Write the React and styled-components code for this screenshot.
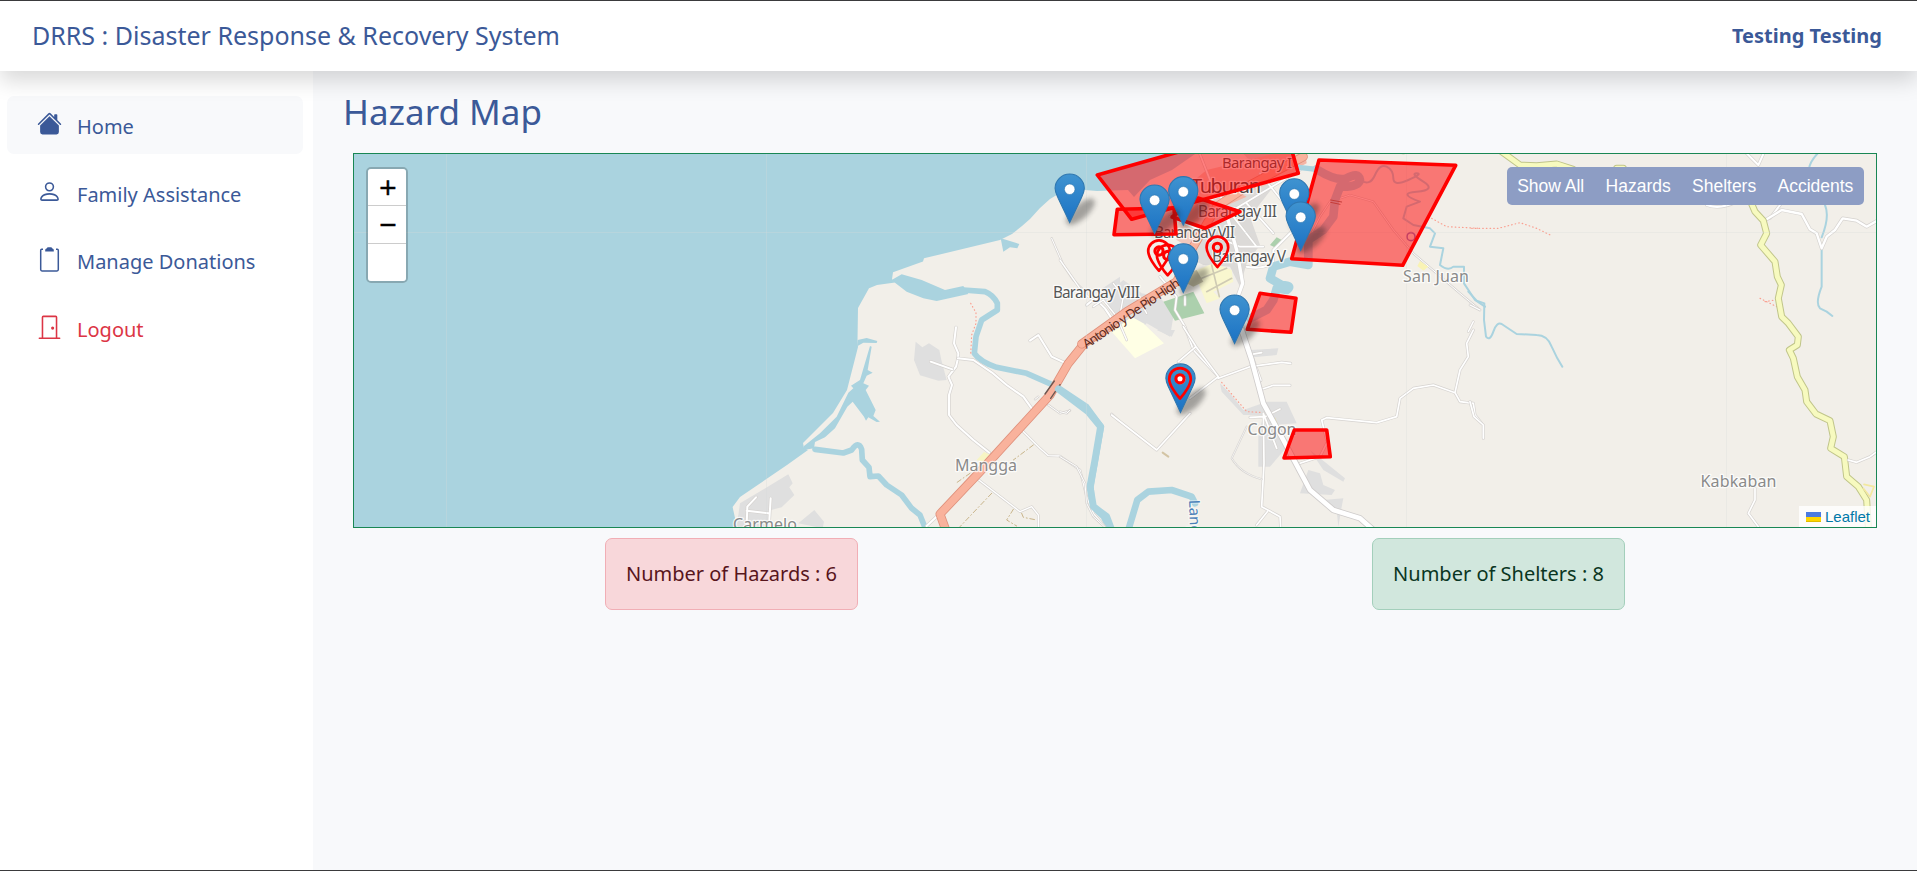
import React from "react";
import styled, { createGlobalStyle, css } from "styled-components";
import { BsHouseFill, BsPerson, BsDoorClosed } from "react-icons/bs";

const GlobalStyle = createGlobalStyle`
  *, *::before, *::after { box-sizing: border-box; }
  body {
    margin: 0;
    font-family: "Noto Sans", "Liberation Sans", sans-serif;
    font-size: 20px;
    line-height: 1.5;
    color: #3b5998;
    background: #f8f9fb;
  }
`;

const Page = styled.div`
  display: flex;
  flex-direction: column;
  height: 871px;
  border-top: 1px solid #3a3a3c;
  border-bottom: 1px solid #3a3a3c;
  overflow: hidden;
`;

const Header = styled.header`
  position: relative;
  z-index: 2;
  flex: none;
  display: flex;
  align-items: center;
  justify-content: space-between;
  height: 70px;
  padding: 0 35px 0 32px;
  background: #fff;
  box-shadow: 0 10px 20px rgba(0, 0, 0, 0.15);
`;

const Brand = styled.div`
  font-size: 25px;
`;

const UserName = styled.div`
  font-weight: 700;
  font-size: 20px;
`;

const Body = styled.div`
  flex: 1;
  display: flex;
  min-height: 0;
`;

const Sidebar = styled.nav`
  flex: none;
  display: flex;
  flex-direction: column;
  gap: 10px;
  width: 313px;
  padding: 25px 10px 0 7px;
  background: #fff;
`;

const NavItem = styled.a`
  display: flex;
  align-items: center;
  gap: 15px;
  height: 57.7px;
  padding: 0 30px;
  border-radius: 7px;
  color: ${(p) => (p.$danger ? "#dc3545" : "#3b5998")};
  ${(p) => p.$active && css`background: #f8f9fb;`}
  svg {
    width: 25px;
    height: 25px;
    margin-bottom: 2px;
  }
`;

const NavLabel = styled.span`
  padding-top: 4px;
`;

const Main = styled.main`
  flex: 1;
  display: flex;
  flex-direction: column;
  padding: 14px 35px 0 30px;
`;

const Title = styled.h1`
  margin: 0 0 15px;
  font-size: 35px;
  font-weight: 400;
  line-height: 53px;
`;

const MapFrame = styled.section`
  position: relative;
  height: 375px;
  margin: 0 5px 0 10px;
  border: 1px solid #198754;
  overflow: hidden;
`;

const MapCanvas = styled.svg`
  display: block;
  width: 1522px;
  height: 373px;
`;

const ZoomControl = styled.div`
  position: absolute;
  top: 13px;
  left: 12px;
  width: 42px;
  border: 2px solid rgba(0, 0, 0, 0.2);
  border-radius: 5px;
  background-clip: padding-box;
`;

const ZoomButton = styled.button`
  display: flex;
  align-items: center;
  justify-content: center;
  width: 100%;
  height: 38px;
  padding: 0 0 0 2px;
  border: 0;
  border-bottom: 1px solid #ccc;
  background: #fff;
  color: #000;
  font: 23px/1 "DejaVu Sans", sans-serif;
  -webkit-text-stroke: 0.5px #000;
  &:first-child { height: 37px; border-radius: 3px 3px 0 0; }
  &:last-child { height: 37px; border-bottom: 0; border-radius: 0 0 3px 3px; }
`;

const FilterBar = styled.div`
  position: absolute;
  top: 13px;
  right: 12px;
  display: flex;
  height: 38px;
  border-radius: 5px;
  background: #8d9dc4;
  overflow: hidden;
`;

const FilterButton = styled.button`
  padding: 0 10.65px;
  border: 0;
  background: none;
  color: #fff;
  font: 17.5px "Liberation Sans", Arial, sans-serif;
`;

const Attribution = styled.div`
  position: absolute;
  right: 0;
  bottom: 0;
  display: flex;
  align-items: center;
  gap: 4px;
  height: 21px;
  padding: 0 6px 0 7px;
  background: rgba(255, 255, 255, 0.8);
  color: #0078a8;
  font: 15px "Liberation Sans", Arial, sans-serif;
`;

const Flag = styled.svg`
  width: 15px;
  height: 10px;
`;

const Stats = styled.div`
  display: grid;
  grid-template-columns: 1fr 1fr;
  justify-items: center;
  margin: 10px 0 0 5px;
`;

const tones = {
  danger: css`background: #f8d7da; border-color: #f1aeb5; color: #58151c;`,
  success: css`background: #d1e7dd; border-color: #a3cfbb; color: #0a3622;`,
};

const Stat = styled.div`
  display: flex;
  align-items: center;
  justify-content: center;
  width: 253px;
  height: 72px;
  border: 1px solid;
  border-radius: 7px;
  ${(p) => tones[p.$tone]}
`;

const ClipboardIcon = () => (
  <svg viewBox="0 0 25 25" fill="none">
    <path d="M6 2.3H4.6Q3.7 2.3 3.7 3.4V22.6Q3.7 24 5 24H20Q21.3 24 21.3 22.6V3.4Q21.3 2.3 20.4 2.3H19" stroke="currentColor" strokeWidth="1.5" />
    <path d="M8.2 4.4V3Q8.2 2 9.6 1.6Q10 0.2 11.4 0.2H13.6Q15 0.2 15.4 1.6Q16.8 2 16.8 3V4.4Z" fill="currentColor" />
  </svg>
);

/* Map sheets are drafted at three units per pixel and placed at their origin. */
const Sheet = ({ x, y, children }) => (
  <g transform={`translate(${x} ${y}) scale(0.33333)`} fill="none" strokeLinejoin="round" strokeLinecap="round">
    {children}
  </g>
);

const Line = ({ d, color, casing, w, c = 3 }) => (
  <>
    {casing && <path d={d} stroke={casing} strokeWidth={w + c} />}
    <path d={d} stroke={color} strokeWidth={w} />
  </>
);
const WATER = "#aad3df";
const Water = ({ d, w = 20 }) => <Line d={d} color={WATER} w={w} />;
const Road = ({ d, w = 6 }) => <Line d={d} color="#fff" casing="#d6d3d0" w={w} c={4} />;
const Trunk = ({ d }) => <Line d={d} color="#f9b29c" casing="#df917c" w={22} c={5} />;
const Secondary = ({ d }) => <Line d={d} color="#f7fabf" casing="#c0c58a" w={15} c={6} />;
const Path = ({ d }) => <path d={d} stroke="#fa9f90" strokeWidth="3.5" strokeDasharray="2 9" />;
const Track = ({ d }) => <path d={d} stroke="#c8b48a" strokeWidth="3" strokeDasharray="14 8 3 8" />;
const Built = ({ d, fill = "#dfdfdf" }) => <path d={d} fill={fill} />;

const Place = ({ x, y, size = 16, width, color = "#8a8a8a", children, ...rest }) => (
  <text
    x={x} y={y} fontSize={size} textLength={width} fill={color}
    stroke="#fff" strokeOpacity="0.75" strokeWidth="2.6" strokeLinejoin="round" paintOrder="stroke"
    fontFamily='"Noto Sans", sans-serif' {...rest}
  >
    {children}
  </text>
);

const Marker = ({ x, y }) => (
  <g transform={`translate(${x} ${y}) scale(1.2)`}>
    <ellipse cx="9" cy="-9" rx="15" ry="6" transform="rotate(-42 9 -9)" fill="#222" opacity="0.38" filter="url(#soft)" />
    <path
      d="M0 -40.5C-6.8 -40.5 -12.2 -35 -12.2 -28.6C-12.2 -25.4 -10.6 -22.6 -9.6 -20.3L0 0L9.6 -20.3C10.6 -22.6 12.2 -25.4 12.2 -28.6C12.2 -35 6.8 -40.5 0 -40.5Z"
      fill="url(#pin)" stroke="#2f77b0" strokeWidth="0.9"
    />
    <circle cx="0" cy="-27.8" r="4.4" fill="#fff" stroke="#2e75ac" strokeWidth="0.5" />
  </g>
);

const Incident = ({ x, y }) => (
  <g transform={`translate(${x} ${y})`} fill="none" stroke="red" strokeWidth="2.7" strokeLinejoin="round">
    <path d="M0 -1.8C-4.4 -6.4 -10.8 -15.6 -10.8 -21.4A10.8 10.8 0 0 1 10.8 -21.4C10.8 -15.6 4.4 -6.4 0 -1.8Z" />
    <circle cx="0" cy="-21.5" r="4.1" strokeWidth="3.1" />
  </g>
);

const hazards = [
  "1319,160 1455.7,165.3 1402.7,265.3 1291.7,258.7",
  "1097.3,175 1182,151 1210,144 1290,144 1298.3,173.3 1131.7,219.3",
  "1117.3,209.3 1174,208 1176,234 1114,234.7",
  "1240,211.7 1205,228.3 1172,217 1198,198",
  "1260,293.3 1296,298.3 1291,332.3 1247.3,329.3",
  "1294.3,430 1326.7,430 1330.3,456.7 1284,458",
];
const shelters = [
  [1069.7, 222.6], [1183.3, 225.2], [1294.3, 227.4], [1154.6, 233.6],
  [1300.7, 250.6], [1183.3, 292.4], [1234.6, 343.6], [1180.5, 412.5],
];
const incidents = [[1159, 272.5], [1167.7, 277], [1217.4, 268.8]];

const HazardMap = () => (
  <MapCanvas viewBox="354 154 1522 373">
    <defs>
      <linearGradient id="pin" x1="0" y1="0" x2="0" y2="1">
        <stop offset="0" stopColor="#3f93d0" />
        <stop offset="1" stopColor="#1b72c4" />
      </linearGradient>
      <filter id="soft" x="-50%" y="-80%" width="200%" height="260%">
        <feGaussianBlur stdDeviation="2.4" />
      </filter>
    </defs>
    <rect x="354" y="154" width="1522" height="373" fill="#f2efe9" />
    <path
      fill={WATER}
      d="M354 154H1195L1172 170L1150 180L1134 197L1128 190L1097 191L1085 190L1060 193L1050 199L1040 208L1030 219L1022 226L1012 234L1000 240L924 258.3L923 261.6L893 272.3L892 279.3L895 282.6L877 285L869 288.3L858 308L857.5 340L858 347L847 390L833 413L803 443L804 448L808 450L787 465L740 497L732.6 507L737 527H354Z"
    />

    <Sheet x={720} y={240}>
      <path fill={WATER} d="M842 -5L850 35L870 22L892 25L898 12L860 0ZM515 120L545 103L605 120L675 150L730 138L745 162L650 183L610 175L560 155L525 128ZM413 300L440 294L472 303L470 309L430 308L413 318ZM450 318L455 320L443 390L458 398L440 407L430 430L447 437L437 450L467 510L460 528L480 545L470 546L445 532L438 542L432 530L398 485L382 500L345 565L315 592L285 606L282 625L250 630L252 618L300 580L350 530L385 458L400 445L393 437L420 420Z" />
      <Water w={17} d="M670 162L730 150L795 155Q820 165 832 190L832 210L785 240L768 290L763 340Q780 365 830 382L920 400L1010 440L1100 500L1144 560L1128 650L1113 740L1117 800L1150 830L1170 870" />
      <Water w={17} d="M285 628L370 639L395 630Q415 600 425 628L427 660L447 682L450 710L475 708L500 735L545 765L575 805L600 825L618 870" />
      <Built d="M587 305L607 322L627 310L658 330L664 360L680 420L655 422L600 406L582 360Z" />
      <Built d="M50 860L60 790L205 703L218 730L208 742L223 765L185 802L145 812L145 860ZM235 850L283 810L312 845L308 865Z" />
      <Built d="M1140 150L1200 110L1200 195L1170 215Z" />
      <Path d="M752 190L768 218L768 250L755 285L752 345" />
      <Road d="M708 262L702 310L715 340L714 355L708 380L685 410L696 435L687 465L687 525L710 555L760 600L808 638" />
      <Road d="M714 355L760 360L815 397L860 435L910 470L935 505" />
      <Road d="M632 365L697 388" />
      <Road d="M930 302L955 285L995 350L1038 370" />
      <Road d="M905 570L960 625L985 647L1020 648L1080 690L1100 770L1120 820L1155 860" w={4} />
      <Road d="M770 715L900 815L935 800L955 825L955 860" w={4} />
      <Road d="M945 478L955 470M985 495L1020 520L1050 512" w={3} />
      <Road d="M995 -5L1030 75L1060 120L1100 160" w={3} />
      <Road d="M1100 195L1125 175L1155 205L1185 250" />
      <Road d="M80 855L82 800L108 772M80 812L145 820M152 775L148 840M620 858L655 825" />
      <Road d="M1175 522L1200 545" w={4} />
      <Track d="M940 615L880 660M750 700L710 728M815 760L720 860M880 808L860 840L890 858M905 820L910 832L950 840" />
      <path d="M770 660L792 636L812 645L790 665Z" fill="#f7f5c4" />
      <Trunk d="M678 872L660 822L780 695L990 465L1045 370L1095 308L1205 237" />
      <path d="M975 462L1003 423M992 475L1020 434" stroke="#6b5650" strokeWidth="4" />
    </Sheet>

    <Sheet x={1060} y={150}>
      <Built fill="#dcdad8" d="M330 190L400 150L720 20L740 0L540 0L640 110L570 200L600 285L560 340L540 410L510 350L430 345L400 330Z" />
      <Built d="M155 420L190 390L245 430L300 440L340 500L330 560L260 520L200 580L140 460Z" />
      <Built fill="#f0c9bd" d="M330 150L440 60L690 0L740 15L700 70L560 130L420 190L400 300L350 270Z" />
      <Built fill="#f5b5a5" d="M500 150L540 130L560 140L480 175ZM690 25L735 0L740 40L720 50Z" />
      <Built fill="#f9f7cf" d="M400 365L460 340L515 360L520 395L460 425L480 445L440 460L415 400Z" />
      <path d="M425 385L500 355M440 425L515 385M455 345L478 440" stroke="#cfcbb4" strokeWidth="5" />
      <Built fill="#acd0ad" d="M310 455L400 425L433 490L345 512ZM630 285L650 262L665 270L650 295Z" />
      <Built fill="#c9c4a4" d="M380 370L410 360L430 395L400 410L380 400Z" />
      <Built fill="#ffffe5" d="M215 500L250 520L312 580L225 625L155 545Z" />
      <Road d="M415 0L450 90L520 200L590 290M600 70L680 170L720 200M520 180L720 60M450 150L600 90M330 200L420 240L540 290L610 290M560 160L640 250" w={5} />
      <Road d="M700 240L640 300L640 340Q600 360 560 350" w={6} />
      <Road d="M300 380L350 440L345 480L375 530L400 600L475 680M375 465V440" w={5} />
      <Road d="M490 160L530 300L548 400L530 450L555 570L600 690" w={10} />
      <Road d="M0 330L70 430L100 450M160 400L190 440L175 520M100 470L130 450L170 500L200 570M190 440L235 445L260 490" w={4} />
      <Road d="M810 155L780 200L750 260M810 155L870 135L940 155L1000 240L1060 310L1130 370L1200 430L1260 480" w={3} />
      <Water w={16} d="M715 52L770 58" />
      <Water w={26} d="M770 58Q830 95 860 85Q895 65 900 90Q895 112 840 110L825 150L820 200L790 240L745 270L745 345L690 335L640 350L630 385L665 405Q700 405 680 420L650 415L640 450L620 480L570 505" />
      <Water w={6} d="M900 90Q930 110 945 75T980 50T1000 85T1045 90T1070 70T1090 95T1070 125T1080 155L1040 170L1030 205L1060 225L1110 235L1125 250L1110 290L1150 295L1140 345Q1165 365 1180 350L1212 350L1212 400L1245 450L1275 470" />
      <Path d="M1115 205L1160 230L1260 235" />
      <path d="M812 150L845 156M812 157L840 163" stroke="#8c7770" strokeWidth="3" />
      <circle cx="1053" cy="260" r="12" stroke="#8a7fc5" strokeWidth="5" />
      <Built fill="#f9f3b5" d="M1080 333L1105 350L1090 362L1072 348Z" />
      <Secondary d="M980 -2L1030 2" />
      <Trunk d="M65 582L200 485L350 395L400 290L470 170L560 110L730 20" />
    </Sheet>

    <Sheet x={1060} y={330}>
      <Built d="M570 60L655 55L650 75L580 82ZM480 160L510 190L550 240L620 215L680 215L710 280L640 285L690 340L630 410H595V320L610 255H550L485 185ZM720 490L745 420L780 430L790 465L825 480L815 495ZM790 510L850 505L845 530L835 590L830 540ZM750 360L855 445L850 455L790 420ZM290 0H345L335 20Z" />
      <Road d="M370 -10L408 50L475 140L390 205M475 145L570 110L665 97L692 100M355 95L408 50M155 255L290 360L390 250" w={5} />
      <Road d="M575 73L605 68M605 178L640 166L690 166M570 262L615 260L660 237M650 355L610 250L612 400L605 530L660 560L662 592M622 545L590 585" w={5} />
      <Road d="M560 290L515 385Q540 430 605 448" w={2} />
      <Path d="M485 157L560 245L600 247" />
      <Road d="M800 330L785 270L800 263L950 278L1010 260L1020 205L1060 175L1120 165L1185 188L1200 215L1240 220L1245 255L1265 280M1185 188L1200 120L1225 80L1220 40L1240 0M720 400L780 380L800 340" w={5} />
      <Built fill="#f0e9a8" d="M645 262L655 285L645 280Z" />
      <Line color="#fff" casing="#cfcccb" w={14} c={5} d="M530 -30L545 0L575 90L610 220L670 330L750 480L820 540L900 565L940 600" />
      <Water w={21} d="M-5 177L85 245L122 290L105 390L90 470L100 530L140 560L155 600" />
      <Water w={20} d="M205 600L232 510L265 485L335 480L395 500L405 520" />
      <Road d="M0 380L50 410L75 460L80 520L100 560L135 592M0 245L20 250L30 240" w={3} />
      <path d="M308 368L325 380" stroke="#d3c4a4" strokeWidth="6" />
    </Sheet>

    <Sheet x={1470} y={150}>
      <Water w={6} d="M-5 425L20 452L43 460L42 510L48 560Q60 575 70 545Q80 515 95 522L140 552L200 555Q232 555 245 590L262 625L277 650M1045 8Q1015 40 1018 60M1065 165Q1080 200 1055 262M1055 295V410Q1035 460 1050 475L1070 485L1087 498" />
      <Path d="M5 235L85 235L150 218L200 235L245 257M870 445L920 470M885 455L915 450" />
      <Road d="M830 10L865 45L880 12M710 165Q750 180 800 155M930 165L900 205" w={6} />
      <Road d="M890 208L935 180L995 192L1020 238L1040 250L1055 295L1070 260L1095 240L1118 205L1160 212L1190 230L1225 210" w={7} />
      <Road d="M0 465L30 480M10 515L-5 545" w={4} />
      <Secondary d="M95 5L150 45L200 47L260 42L310 58M440 55H460M840 150L855 185L880 212L890 250L872 285L915 335L922 380L934 405L925 445L935 500L955 520L985 560L982 585L958 600L970 625L982 680L1005 720L1010 755L1038 792L1080 812L1090 860L1082 895L1123 920L1130 980L1165 1010L1190 1050L1195 1130" />
      <Road d="M1135 930L1160 937L1200 920L1225 902" w={5} />
      <path d="M1182 1003L1212 1010L1200 1040L1180 1015" stroke="#f3e9a0" strokeWidth="5" />
      <Road d="M855 1015V1050L835 1090L865 1130M0 755L12 800L40 825V865" w={5} />
    </Sheet>

    <path
      d="M446.5 154V527M766.5 154V527M1086.5 154V527M1406.5 154V527M1726.5 154V527M354 232.5H1876"
      stroke="#d8dcdc" strokeOpacity="0.3"
    />

    <Place x={1222} y={167.5} size={15} width={70} color="#555">Barangay I</Place>
    <Place x={1191} y={193} size={20} width={70} color="#4d4445">Tuburan</Place>
    <Place x={1198} y={217} size={15.5} width={79} color="#555">Barangay III</Place>
    <Place x={1154} y={238} size={15.5} width={81} color="#555">Barangay VII</Place>
    <Place x={1212} y={262} size={15.5} width={74} color="#555">Barangay V</Place>
    <Place x={1053} y={297.5} size={15.5} width={87} color="#555">Barangay VIII</Place>
    <Place x={1403} y={282} width={66}>San Juan</Place>
    <Place x={1247.5} y={435} width={49}>Cogon</Place>
    <Place x={955} y={470.5} width={62}>Mangga</Place>
    <Place x={733} y={529.5} width={64}>Carmelo</Place>
    <Place x={1700.5} y={487} width={76}>Kabkaban</Place>
    <Place x={0} y={0} size={13} width={114} color="#5c2a1c" strokeOpacity="0" transform="translate(1086.5 349) rotate(-34)">
      Antonio y De Pio High
    </Place>
    <Place x={0} y={0} size={15} color="#4a80b8" strokeOpacity="0.4" transform="translate(1189 500) rotate(88)">Lang</Place>

    {hazards.map((points) => (
      <polygon key={points} points={points} fill="red" fillOpacity="0.5" stroke="red" strokeWidth="3.6" strokeLinejoin="round" />
    ))}
    {incidents.map(([x, y]) => <Incident key={x} x={x} y={y} />)}
    {shelters.map(([x, y]) => <Marker key={`${x}-${y}`} x={x} y={y} />)}
    <Incident x={1180} y={400.3} />
  </MapCanvas>
);

const navItems = [
  { label: "Home", Icon: BsHouseFill, active: true },
  { label: "Family Assistance", Icon: BsPerson },
  { label: "Manage Donations", Icon: ClipboardIcon },
  { label: "Logout", Icon: BsDoorClosed, danger: true },
];

export default function App() {
  return (
    <Page>
      <GlobalStyle />
      <Header>
        <Brand>DRRS : Disaster Response &amp; Recovery System</Brand>
        <UserName>Testing Testing</UserName>
      </Header>
      <Body>
        <Sidebar>
          {navItems.map(({ label, Icon, active, danger }) => (
            <NavItem key={label} $active={active} $danger={danger}>
              <Icon />
              <NavLabel>{label}</NavLabel>
            </NavItem>
          ))}
        </Sidebar>
        <Main>
          <Title>Hazard Map</Title>
          <MapFrame>
            <HazardMap />
            <ZoomControl>
              <ZoomButton>+</ZoomButton>
              <ZoomButton>−</ZoomButton>
              <ZoomButton aria-label="Locate" />
            </ZoomControl>
            <FilterBar>
              {["Show All", "Hazards", "Shelters", "Accidents"].map((name) => (
                <FilterButton key={name}>{name}</FilterButton>
              ))}
            </FilterBar>
            <Attribution>
              <Flag viewBox="0 0 15 10">
                <rect width="15" height="5" fill="#4c7be1" />
                <rect y="5" width="15" height="5" fill="#ffd500" />
                <rect y="9" width="15" height="1" fill="#e0bc00" />
              </Flag>
              Leaflet
            </Attribution>
          </MapFrame>
          <Stats>
            <Stat $tone="danger">Number of Hazards : 6</Stat>
            <Stat $tone="success">Number of Shelters : 8</Stat>
          </Stats>
        </Main>
      </Body>
    </Page>
  );
}
